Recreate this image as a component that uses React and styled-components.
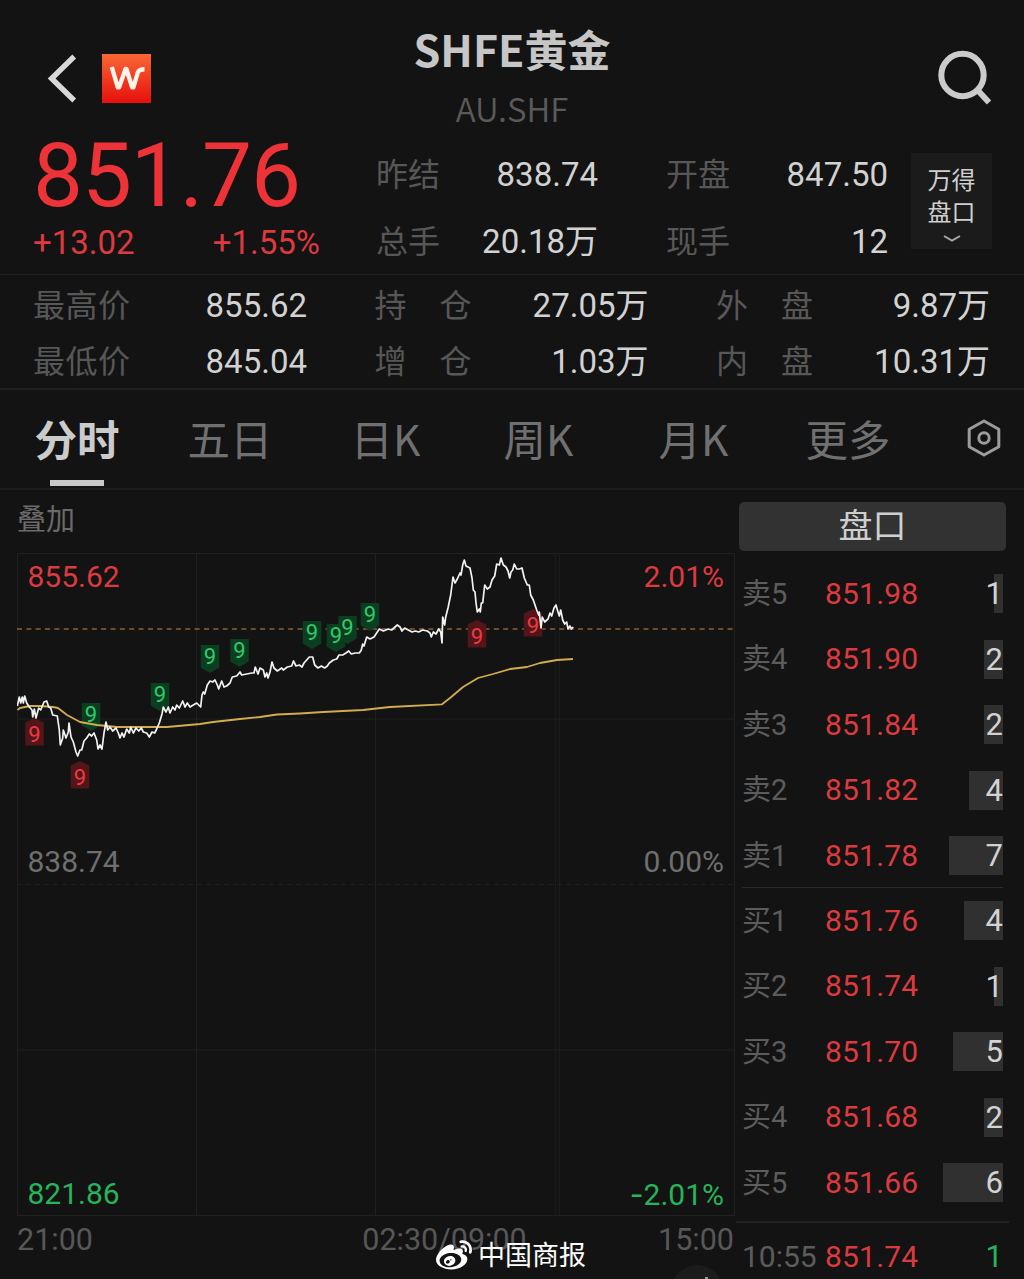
import React from 'react';
import styled, { createGlobalStyle } from 'styled-components';
import { FaWeibo } from 'react-icons/fa';

const GlobalStyle = createGlobalStyle`
  * {
    box-sizing: border-box;
  }
  body {
    margin: 0;
    background: #131313;
  }
`;

const RED = '#ee3338';
const RED_TEXT = '#dc3a3f';
const GREEN = '#27b35a';

const Screen = styled.div`
  position: relative;
  width: 1024px;
  height: 1279px;
  overflow: hidden;
  display: flex;
  flex-direction: column;
  background: #131313;
  color: #cfcfcf;
  font-family: Roboto, 'Noto Sans CJK SC', sans-serif;
  white-space: nowrap;

  > * {
    flex-shrink: 0;
  }
`;

const Header = styled.header`
  height: 136px;
  display: grid;
  grid-template-columns: 240px 1fr 240px;
`;
const HeaderLeft = styled.div`
  display: flex;
  align-items: flex-start;
  gap: 25px;
  padding: 54px 0 0 47px;
`;
const HeaderRight = styled.div`
  display: flex;
  justify-content: flex-end;
  align-items: flex-start;
  padding: 50px 32px 0 0;
`;
const Logo = styled.svg`
  width: 49px;
  height: 49px;
`;
const TitleBlock = styled.div`
  display: flex;
  flex-direction: column;
  align-items: center;
  font-family: 'Noto Sans CJK SC', sans-serif;
`;
const Title = styled.h1`
  margin: 18px 0 0;
  font-size: 43px;
  line-height: 60px;
  font-weight: 700;
  color: #c6c6c6;
`;
const Symbol = styled.div`
  margin-top: 10px;
  font-size: 33px;
  line-height: 40px;
  font-weight: 350;
  color: #5a5a5a;
`;

const Quote = styled.section`
  height: 139px;
  display: flex;
  border-bottom: 1px solid #202020;
`;
const PriceBlock = styled.div`
  width: 376px;
  padding-left: 33px;
`;
const LastPrice = styled.div`
  height: 84px;
  line-height: 79px;
  font-size: 89px;
  letter-spacing: -1.1px;
  color: ${RED};
`;
const Changes = styled.div`
  display: flex;
  justify-content: space-between;
  width: 287px;
  height: 46px;
  line-height: 46px;
  font-size: 33px;
  color: ${RED_TEXT};
`;
const QuoteGrid = styled.div`
  width: 512px;
  display: grid;
  grid-template-columns: 222px 222px;
  column-gap: 68px;
  grid-auto-rows: 67px;
  padding-top: 5px;
`;
const Pair = styled.div`
  display: flex;
  justify-content: space-between;
  align-items: center;
`;
const Label = styled.span`
  display: flex;
  justify-content: space-between;
  width: ${({ $width }) => ($width ? `${$width}px` : 'auto')};
  font-size: 32px;
  line-height: 40px;
  color: #575757;
`;
const Value = styled.span`
  font-size: 33px;
  line-height: 40px;
  color: #d2d2d2;
`;
const BoardButton = styled.button`
  width: 81px;
  height: 96px;
  margin: 17px 0 0 23px;
  padding: 12px 0 0;
  border: 0;
  display: flex;
  flex-direction: column;
  align-items: center;
  background: #1b1b1b;
  color: #cfcfcf;
  font: 24px/32px Roboto, 'Noto Sans CJK SC', sans-serif;

  svg {
    margin-top: 5px;
  }
`;

const Stats = styled.section`
  height: 115px;
  padding: 3px 33px 0;
  display: grid;
  grid-template-columns: 274px 274px 274px;
  column-gap: 67.5px;
  grid-auto-rows: 56px;
  border-bottom: 2px solid #202020;
`;

const Tabs = styled.nav`
  height: 100px;
  display: flex;
  border-bottom: 2px solid #1d1d1d;
  font-family: 'Noto Sans CJK SC', sans-serif;
`;
const Tab = styled.div`
  width: ${({ $width }) => $width}px;
  padding-left: ${({ $inset }) => $inset}px;
  font-size: 42.5px;
  line-height: 95px;
  font-weight: ${({ $active }) => ($active ? 700 : 400)};
  color: ${({ $active }) => ($active ? '#cbcbcb' : '#707070')};
`;
const TabLabel = styled.span`
  display: flex;
  flex-direction: column;
  align-items: center;
  width: 85px;

  &::after {
    content: '';
    width: 54px;
    height: 6px;
    margin-top: -5px;
    background: #c9c9c9;
  }
`;
const SettingsSlot = styled.div`
  padding: 29px 0 0 7px;
`;

const Body = styled.main`
  height: 789px;
  display: flex;
`;
const ChartPanel = styled.section`
  width: 735px;
  padding-left: 17px;
`;
const Overlay = styled.div`
  height: 63px;
  line-height: 60px;
  font-size: 29px;
  color: #6a6a6a;
`;
const Plot = styled.div`
  position: relative;
  height: 663px;
  display: grid;
  grid-template-rows: 285px 332px;
`;
const Canvas = styled.svg`
  position: absolute;
  inset: 0;
  width: 718px;
  height: 663px;
`;
const ScaleRow = styled.div`
  position: relative;
  display: flex;
  justify-content: space-between;
  padding: 0 11px 0 10.5px;
  height: 48px;
  font-size: 30px;
  line-height: 48px;
  color: ${({ $color }) => $color};
`;
const Minus = styled.span`
  font-family: Inter, sans-serif;
`;
const TimeAxis = styled.div`
  display: flex;
  justify-content: space-between;
  padding-right: 1px;
  font-size: 30.5px;
  line-height: 48px;
  color: #575757;
`;
const BreakTime = styled.span`
  margin-left: 138px;
`;

const Book = styled.aside`
  flex: 1;
  padding: 12px 15px 0 4px;
`;
const BookTab = styled.div`
  width: 267px;
  height: 49px;
  border-radius: 5px;
  background: #323232;
  font-size: 34px;
  line-height: 49px;
  text-align: center;
  color: #cfcfcf;
`;
const Side = styled.div`
  height: ${({ $height }) => $height}px;
  margin-left: 3px;
  width: 261px;
  padding-top: ${({ $top }) => $top || 0}px;
  border-bottom: 1px solid ${({ $last }) => ($last ? 'transparent' : '#2a2a2a')};
`;
const Level = styled.div`
  height: 65.5px;
  display: grid;
  grid-template-columns: 83px 100px 1fr;
  align-items: center;
  font-size: 30px;
  line-height: 40px;
`;
const LevelName = styled.span`
  font-size: ${({ $size }) => $size || 29}px;
  color: #5c5c5c;
`;
const LevelPrice = styled.span`
  letter-spacing: 0.2px;
  color: ${RED_TEXT};
`;
const Volume = styled.span`
  justify-self: end;
  display: flex;
  justify-content: flex-end;
  height: 39px;
  font-size: 31px;
  background: ${({ $color }) => ($color ? 'none' : '#303030')};
  color: ${({ $color }) => $color || '#d2d2d2'};
`;
const Trades = styled.div`
  width: 273px;
  margin: 5px 0 0 -3px;
  padding: 1px 6px 0;
  border-top: 2px solid #222;
`;

const FloatButton = styled.div`
  position: absolute;
  left: 671px;
  top: 1265px;
  width: 52px;
  height: 52px;
  border-radius: 50%;
  background: #1c1c1c;

  &::after {
    content: '';
    position: absolute;
    left: 34px;
    top: 12px;
    width: 3px;
    height: 3px;
    background: #999;
  }
`;
const Watermark = styled.div`
  position: absolute;
  left: 436px;
  top: 1236px;
  display: flex;
  align-items: center;
  gap: 6px;
  font-size: 27px;
  line-height: 40px;
  color: #fff;
`;

const quoteItems = [
  ['昨结', '838.74'],
  ['开盘', '847.50'],
  ['总手', '20.18万'],
  ['现手', '12'],
];

const statItems = [
  ['最高价', '855.62'],
  ['持仓', '27.05万'],
  ['外盘', '9.87万'],
  ['最低价', '845.04'],
  ['增仓', '1.03万'],
  ['内盘', '10.31万'],
];

const tabs = [
  { name: '分时', width: 154, inset: 34.5, active: true },
  { name: '五日', width: 160, inset: 33.5 },
  { name: '日K', width: 154, inset: 36.5 },
  { name: '周K', width: 154, inset: 35.5 },
  { name: '月K', width: 154, inset: 36.5 },
  { name: '更多', width: 184, inset: 29.5 },
];

const asks = [
  ['卖5', '851.98', 1, 9],
  ['卖4', '851.90', 2, 19],
  ['卖3', '851.84', 2, 19],
  ['卖2', '851.82', 4, 34],
  ['卖1', '851.78', 7, 54],
];
const bids = [
  ['买1', '851.76', 4, 39],
  ['买2', '851.74', 1, 9],
  ['买3', '851.70', 5, 50],
  ['买4', '851.68', 2, 19],
  ['买5', '851.66', 6, 60],
];

// signal flags: x is the centre, y the top of the flag
const flags = [
  { x: 91, y: 703 },
  { x: 160, y: 683 },
  { x: 210, y: 645 },
  { x: 239.5, y: 639 },
  { x: 312, y: 621 },
  { x: 336, y: 624 },
  { x: 347.5, y: 616 },
  { x: 370, y: 603 },
  { x: 34.5, y: 718, up: true },
  { x: 80, y: 761, up: true },
  { x: 477, y: 620, up: true },
  { x: 533, y: 609, up: true },
];

const priceLine =
  '17.3,706 19.3,697 20.7,703 22.3,697 23.3,703 24.7,696 26.7,703 29.3,707 32,710 32.7,717 34.3,709 36,718 38.7,708 40.7,710 44,702 46.7,701 48.7,707 50.7,708 52.7,715 57.3,716 59.3,730 60.3,745 62.7,738 63.3,730 66,738 68.3,732 69,723 71,737 73.3,742 76,752 77.7,756 80,750 81.7,750 84,741 86.7,738 89.3,734 91.7,736 94,733 96.7,740 98,749 100,745 102,749 104,733 106,722 107.7,730 110,727 112.7,731 116,728 118.3,733 120,738 122,733 124,737 126.7,729 129.3,733 130.7,727 133.3,733 136,728 138.7,731 141.3,728 143.3,732 146.7,733 149.3,737 152,732 154.7,733 156.7,729 159.3,723 162,714 163.3,707 166,712 168.3,707 170,713 172.7,707 175,710 176.7,705 179.3,708 182.7,701 185,707 187.3,703 190,707 193.3,705 196.7,703 200.7,707 202,695 203.3,692 204.7,694 207.3,685 210,681 212.7,682 215,680 217.3,685 218.7,689 221.7,681 224,687 226.7,686 230,683 232.3,677 236.7,676 240,672 241.7,675 246.7,674 251.7,673 254,673 255.3,667 258,674 260,668 263.3,670 265,677 266.7,673 268,678 270,672 272,662 274,668 277.3,671 281.7,668 283.3,670 287.3,667 291.7,666 293.5,661 296,666 299.3,665 302,667 304,663 306.7,660 309.3,657 312.7,657 314.7,665 318,668 321.3,666 324.7,668 327.3,666 329.3,663 333.3,660 336.7,659 339,655 342.7,655 346,653 348.7,651 351.3,654 355.3,653 359.3,653 361.3,650 362.7,644 364,646 366.7,637 370,639 374,637 376,634 379.3,629 383.3,631 388.3,629 391.7,630 395,627 397.3,625 400,627 402,631 404.7,628 408.3,630 412,632 415.3,631 418.7,632 422.7,630 427.3,631 430,633 431.3,637 433.3,632 436,634 438.7,629 440.7,632 442,643 442.7,617 444.7,625 445.7,617 448,608 450.7,595 453,577 455,583 457.3,579 460,573 461,575 462.7,565 464.3,560 466,566 470,568 472,578 473.3,590 475,592 476,603 477.3,612 479.3,609 480.3,612 481.3,603 482.7,603 484.7,585 487.3,589 490,587 492,580 494.7,576 496.7,564 499.3,565 501,558 503.3,565 506,567 508,571 509.7,578 511,572 512.7,570 514.3,564 516.7,569 519.3,569 522,568 524.3,578 527.3,585 529.3,585 530.7,595 533.3,600 536.7,610 538.7,615 539.3,612 541,628 542.3,617 544.7,622 548,619 550,613 551.7,616 554,608 556,605 558,612 559.3,616 560.7,610 562.7,620 564.7,624 566.7,622 568,629 570,626 571.3,629 573.3,627';

const averageLine =
  '17.5,710 20,708 30,706 40,706 53,707 58,708 67,715 80,722 97,725 117,727 140,727 167,727 200,724 213,722 240,719 260,717 277,714.5 300,713.5 323,712 363,710 390,707 442,704.3 450,698 463,687 478,678 493,674 510,669 527,667 540,663 557,660 573,659';

const Chart = () => (
  <Canvas viewBox="17 553 718 663">
    <g stroke="#202020" fill="none">
      <path d="M17.5 553.5H734.5V1215.5H17.5ZM196.5 553V1215M375.5 553V1215" />
      <path d="M555.5 553V1215M559.5 553V1215" stroke="#1b1b1b" />
      <path d="M17 719H734M17 1050H734" />
      <path d="M17 884.5H734" strokeDasharray="5 4" />
    </g>
    <path d="M17 629H734" stroke="#8c6238" strokeWidth="1.3" strokeDasharray="5 4.35" />
    {flags.map(({ x, y, up }) => (
      <path
        key={x}
        d={up ? 'M-9.3 4.5 0 0 9.3 4.5V27.5H-9.3Z' : 'M-9.3 0H9.3V22.5L0 28-9.3 22.5Z'}
        transform={`translate(${x} ${y})`}
        fill={up ? '#52151a' : '#0b3d20'}
      />
    ))}
    {flags.map(({ x, y, up }) => (
      <text
        key={x}
        x={x}
        y={up ? y + 23.5 : y + 19}
        fontSize="22"
        textAnchor="middle"
        fill={up ? '#ec3a40' : '#32c96a'}
      >
        9
      </text>
    ))}
    <polyline points={averageLine} fill="none" stroke="#d2ac50" strokeWidth="1.8" strokeLinejoin="round" />
    <polyline points={priceLine} fill="none" stroke="#f2f2f2" strokeWidth="1.7" strokeLinejoin="round" />
  </Canvas>
);

const LevelRow = ({ level }) => {
  const [name, price, volume, bar] = level;

  return (
    <Level>
      <LevelName>{name}</LevelName>
      <LevelPrice>{price}</LevelPrice>
      <Volume style={{ width: bar }}>{volume}</Volume>
    </Level>
  );
};

const App = () => (
  <>
    <GlobalStyle />
    <Screen>
      <Header>
        <HeaderLeft>
          <svg width="30" height="49" viewBox="0 0 30 49" fill="none" stroke="#d8d8d8" strokeWidth="5.4">
            <path d="M27.2 2.5 4.6 24.5 27.2 46.5" />
          </svg>
          <Logo viewBox="0 0 49 49">
            <defs>
              <linearGradient id="logo" x1="0" y1="0" x2="0" y2="1">
                <stop offset="0" stopColor="#fa6835" />
                <stop offset="1" stopColor="#e60f0b" />
              </linearGradient>
            </defs>
            <rect width="49" height="49" fill="url(#logo)" />
            <path
              d="M9.8 13 15.8 33.4H17L23.6 15H24.4L30.2 33.4H31.4L35.8 18.5Q37 15.2 42.5 15.2"
              fill="none"
              stroke="#fff3ea"
              strokeWidth="4.4"
              strokeLinejoin="round"
            />
          </Logo>
        </HeaderLeft>
        <TitleBlock>
          <Title>SHFE黄金</Title>
          <Symbol>AU.SHF</Symbol>
        </TitleBlock>
        <HeaderRight>
          <svg width="55" height="56" viewBox="0 0 55 56" fill="none" stroke="#cbcbcb" strokeWidth="6">
            <circle cx="25.5" cy="25" r="21.2" />
            <path d="M40.5 40 52 52.5" />
          </svg>
        </HeaderRight>
      </Header>

      <Quote>
        <PriceBlock>
          <LastPrice>851.76</LastPrice>
          <Changes>
            <span>+13.02</span>
            <span>+1.55%</span>
          </Changes>
        </PriceBlock>
        <QuoteGrid>
          {quoteItems.map(([name, value]) => (
            <Pair key={name}>
              <Label>{name}</Label>
              <Value>{value}</Value>
            </Pair>
          ))}
        </QuoteGrid>
        <BoardButton>
          <span>万得</span>
          <span>盘口</span>
          <svg width="18" height="9" viewBox="0 0 18 9" fill="none" stroke="#a8a8a8" strokeWidth="2">
            <path d="M1 2 9 6.5 17 2" />
          </svg>
        </BoardButton>
      </Quote>

      <Stats>
        {statItems.map(([name, value]) => (
          <Pair key={name}>
            <Label $width={97}>
              {name.split('').map((char) => (
                <span key={char}>{char}</span>
              ))}
            </Label>
            <Value>{value}</Value>
          </Pair>
        ))}
      </Stats>

      <Tabs>
        {tabs.map(({ name, width, inset, active }) => (
          <Tab key={name} $width={width} $inset={inset} $active={active}>
            {active ? <TabLabel>{name}</TabLabel> : name}
          </Tab>
        ))}
        <SettingsSlot>
          <svg width="34" height="38" viewBox="0 0 34 38" fill="none" stroke="#9b9b9b" strokeWidth="3">
            <path d="M17 2 31.8 10.3V27.7L17 36 2.2 27.7V10.3Z" strokeLinejoin="round" />
            <circle cx="17" cy="19" r="5.2" />
          </svg>
        </SettingsSlot>
      </Tabs>

      <Body>
        <ChartPanel>
          <Overlay>叠加</Overlay>
          <Plot>
            <Chart />
            <ScaleRow $color={RED_TEXT}>
              <span>855.62</span>
              <span>2.01%</span>
            </ScaleRow>
            <ScaleRow $color="#6f6f6f">
              <span>838.74</span>
              <span>0.00%</span>
            </ScaleRow>
            <ScaleRow $color={GREEN}>
              <span>821.86</span>
              <span>
                <Minus>-</Minus>2.01%
              </span>
            </ScaleRow>
          </Plot>
          <TimeAxis>
            <span>21:00</span>
            <BreakTime>02:30/09:00</BreakTime>
            <span>15:00</span>
          </TimeAxis>
        </ChartPanel>

        <Book>
          <BookTab>盘口</BookTab>
          <Side $top={10} $height={337}>
            {asks.map((level) => (
              <LevelRow key={level[0]} level={level} />
            ))}
          </Side>
          <Side $height={328} $last>
            {bids.map((level) => (
              <LevelRow key={level[0]} level={level} />
            ))}
          </Side>
          <Trades>
            <Level>
              <LevelName $size={30}>10:55</LevelName>
              <LevelPrice>851.74</LevelPrice>
              <Volume $color={GREEN}>1</Volume>
            </Level>
          </Trades>
        </Book>
      </Body>

      <FloatButton />
      <Watermark>
        <FaWeibo size={36} />
        <span>中国商报</span>
      </Watermark>
    </Screen>
  </>
);

export default App;
